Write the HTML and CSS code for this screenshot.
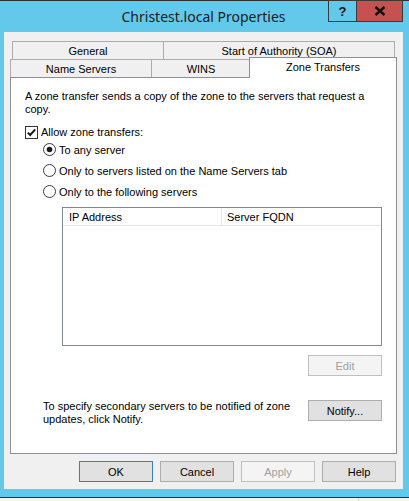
FILE: index.html
```html
<!DOCTYPE html>
<html>
<head>
<meta charset="utf-8">
<title>Christest.local Properties</title>
<link rel="stylesheet" href="styles.css">
</head>
<body>
<div class="frame">
  <div class="titlebar">
    <div class="title">Christest.local Properties</div>
    <div class="caption-btns">
      <div class="cap cap-help">?</div>
      <div class="cap cap-close">
        <svg width="12" height="10" viewBox="0 0 12 10"><path d="M1.5 1 L10.5 9 M10.5 1 L1.5 9" stroke="#111" stroke-width="2.4" fill="none"/></svg>
      </div>
    </div>
  </div>
  <div class="client">
    <div class="tabs">
      <div class="tab-row back">
        <div class="tab t-general">General</div>
        <div class="tab t-soa">Start of Authority (SOA)</div>
      </div>
      <div class="tab-row front">
        <div class="tab t-ns">Name Servers</div>
        <div class="tab t-wins">WINS</div>
        <div class="tab t-zt selected">Zone Transfers</div>
      </div>
    </div>
    <div class="panel">
      <p class="desc">A zone transfer sends a copy of the zone to the servers that request a<br>copy.</p>
      <div class="check-row">
        <span class="checkbox">
          <svg width="13" height="13" viewBox="0 0 13 13"><rect x="0.5" y="0.5" width="12" height="12" fill="#fff" stroke="#333"/><path d="M2.8 6.6 L5.2 9 L10.2 3.4" stroke="#1a1a1a" stroke-width="2" fill="none"/></svg>
        </span>
        <span>Allow zone transfers:</span>
      </div>
      <div class="radios">
        <div class="radio-row">
          <svg class="radio" width="13" height="13" viewBox="0 0 13 13"><circle cx="6.5" cy="6.5" r="6" fill="#fff" stroke="#3a3a3a"/><circle cx="6.5" cy="6.5" r="2.8" fill="#1a1a1a"/></svg>
          <span>To any server</span>
        </div>
        <div class="radio-row">
          <svg class="radio" width="13" height="13" viewBox="0 0 13 13"><circle cx="6.5" cy="6.5" r="6" fill="#fff" stroke="#3a3a3a"/></svg>
          <span>Only to servers listed on the Name Servers tab</span>
        </div>
        <div class="radio-row">
          <svg class="radio" width="13" height="13" viewBox="0 0 13 13"><circle cx="6.5" cy="6.5" r="6" fill="#fff" stroke="#3a3a3a"/></svg>
          <span>Only to the following servers</span>
        </div>
      </div>
      <div class="list">
        <div class="list-head">
          <div class="col col-ip">IP Address</div>
          <div class="col col-fqdn">Server FQDN</div>
        </div>
      </div>
      <div class="edit-row">
        <div class="btn disabled">Edit</div>
      </div>
      <div class="notify-row">
        <p class="notify-text">To specify secondary servers to be notified of zone<br>updates, click Notify.</p>
        <div class="btn">Notify...</div>
      </div>
    </div>
    <div class="dialog-buttons">
      <div class="btn default">OK</div>
      <div class="btn">Cancel</div>
      <div class="btn disabled">Apply</div>
      <div class="btn">Help</div>
    </div>
  </div>
</div>
<div class="desktop"><div class="desk-a"></div><div class="desk-b"></div></div>
</body>
</html>
```
FILE: styles.css
```css
* { box-sizing: border-box; }
html, body { margin: 0; padding: 0; }
body {
  width: 409px;
  height: 501px;
  overflow: hidden;
  background: #f4f4f4;
  font-family: "Liberation Sans", Arial, sans-serif;
  font-size: 11px;
  color: #000;
}
.frame {
  width: 409px;
  background: #63c9ea;
  border-top: 1px solid #2e2e2e;
  border-bottom: 1px solid #2e2e2e;
  padding: 0 6px 8px 4px;
}
.titlebar {
  height: 31px;
  display: grid;
}
.title, .caption-btns { grid-area: 1 / 1; }
.title {
  justify-self: center;
  align-self: center;
  font-family: "Noto Sans", "Liberation Sans", sans-serif;
  font-size: 14px;
  color: #1b1b1b;
}
.caption-btns {
  justify-self: end;
  align-self: start;
  display: flex;
  margin-top: -1px;
}
.cap {
  height: 22px;
  border: 1px solid #3a3a3a;
  display: flex;
  align-items: center;
  justify-content: center;
}
.cap-help {
  width: 29px;
  font-weight: bold;
  font-size: 13px;
  color: #111;
}
.cap-close {
  width: 47px;
  margin-left: -1px;
  background: #c75050;
}
.client {
  width: 399px;
  height: 457px;
  background: #f0f0f0;
  padding: 9px 6px 7px 6px;
}
.tabs { position: relative; }
.tab-row { display: flex; height: 18px; }
.tab-row.back { padding-left: 2px; }
.tab-row.front { align-items: flex-end; }
.tab {
  height: 18px;
  background: #f0f0f0;
  border: 1px solid #acacac;
  display: flex;
  align-items: center;
  justify-content: center;
  white-space: nowrap;
}
.back .tab { border-bottom: none; }
.front .tab { border-bottom: none; }
.t-general { width: 152px; }
.t-soa { width: 232px; margin-left: -1px; }
.t-ns { width: 142px; }
.t-wins { width: 100px; margin-left: -1px; }
.t-zt { width: 148px; margin-left: -2px; }
.tab.selected {
  position: relative;
  z-index: 1;
  height: 21px;
  margin-top: -2px;
  margin-bottom: -1px;
  background: #fff;
  border-color: #8e8f94;
  padding-bottom: 2px;
}
.panel {
  width: 387px;
  height: 377px;
  background: #fff;
  border: 1px solid #8e8f94;
  padding: 12px 14px 0 14px;
}
.desc {
  margin: 0;
  line-height: 13px;
  white-space: nowrap;
}
.check-row {
  margin-top: 9px;
  height: 14px;
  display: flex;
  align-items: center;
  gap: 3px;
}
.checkbox { display: flex; }
.radios { padding-left: 18px; }
.radio-row {
  height: 21px;
  display: flex;
  align-items: center;
  gap: 3px;
}
.radio { display: block; flex: none; }
.list {
  margin: 5px 0 0 37px;
  width: 320px;
  height: 139px;
  border: 1px solid #828790;
  background: #fff;
}
.list-head {
  display: flex;
  height: 18px;
  border-bottom: 1px solid #e5e5e5;
}
.col {
  display: flex;
  align-items: center;
}
.col-ip {
  width: 159px;
  padding-left: 6px;
  border-right: 1px solid #e5e5e5;
}
.col-fqdn { padding-left: 5px; }
.edit-row {
  display: flex;
  justify-content: flex-end;
  margin-top: 9px;
}
.notify-row {
  display: flex;
  justify-content: space-between;
  align-items: flex-start;
  margin-top: 24px;
}
.notify-text {
  margin: 0;
  padding-left: 18px;
  line-height: 13px;
  white-space: nowrap;
}
.btn {
  width: 74px;
  height: 21px;
  background: #e1e1e1;
  border: 1px solid #adadad;
  display: flex;
  align-items: center;
  justify-content: center;
  white-space: nowrap;
}
.btn.default { border-color: #3c7fb1; }
.btn.disabled {
  background: #f4f4f4;
  border-color: #bfbfbf;
  color: #a0a0a0;
}
.dialog-buttons {
  display: flex;
  justify-content: flex-end;
  gap: 7px;
  margin-top: 7px;
  margin-right: 1px;
}
.desktop {
  display: flex;
  height: 3px;
}
.desk-a {
  width: 359px;
  border-right: 1px solid #d6d6d6;
  background: #f4f4f4;
}
.desk-b { flex: 1; background: #f4f4f4; }
```
